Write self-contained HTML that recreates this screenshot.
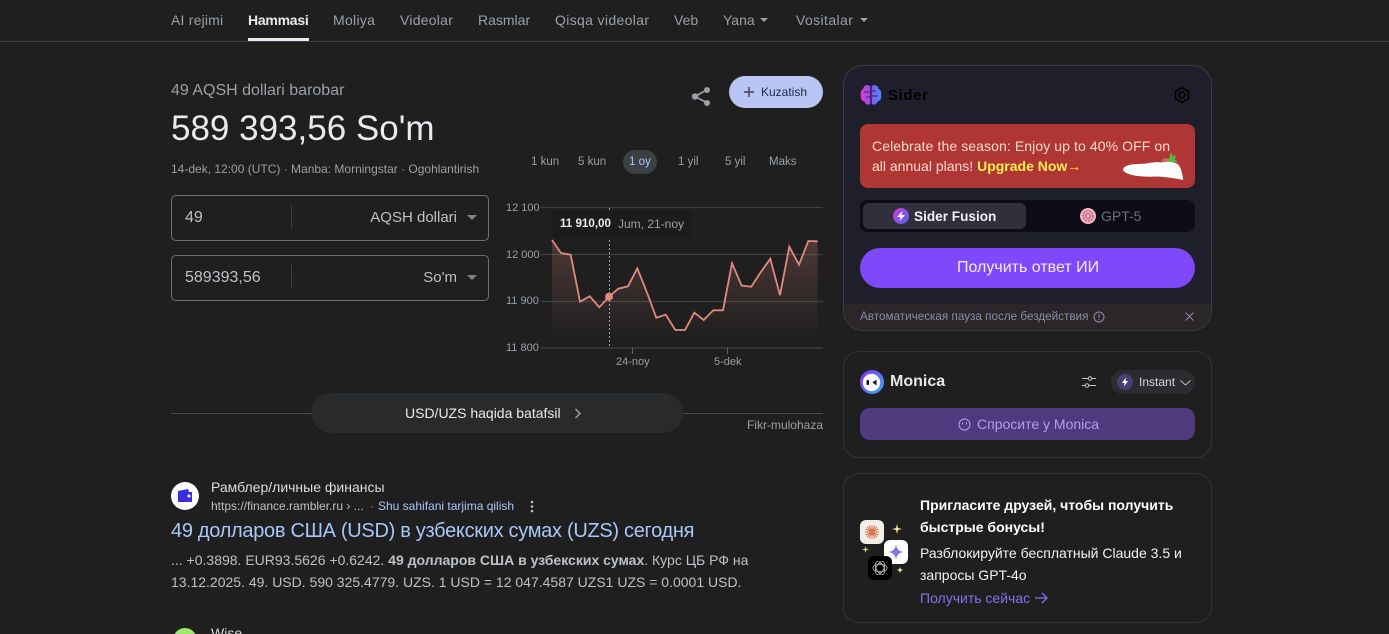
<!DOCTYPE html>
<html lang="uz"><head><meta charset="utf-8"><title>49 AQSH dollari barobar</title>
<style>
html,body{margin:0;padding:0;background:#1f1f1f;width:1389px;height:634px;overflow:hidden}
body{position:relative;font-family:"Liberation Sans","Noto Sans CJK SC",sans-serif;color:#e8eaed}
.t{position:absolute;white-space:nowrap;line-height:1}
.b{position:absolute;box-sizing:border-box}
svg{position:absolute;overflow:visible}
.nav{font-size:14px;color:#9aa0a6;top:13px}
.r{font-size:11.5px;color:#9aa0a6;top:157px}
.y{font-size:11px;color:#9aa0a6;left:506px}
</style></head><body>

<div class="t nav" style="left:171px;letter-spacing:.2px">AI rejimi</div>
<div class="t nav" style="left:248px;color:#e8eaed;font-weight:700;letter-spacing:-.25px">Hammasi</div>
<div class="b" style="left:248px;top:38px;width:61px;height:3px;background:#e8eaed"></div>
<div class="t nav" style="left:333px;letter-spacing:.3px">Moliya</div>
<div class="t nav" style="left:400px;letter-spacing:.25px">Videolar</div>
<div class="t nav" style="left:478px">Rasmlar</div>
<div class="t nav" style="left:555px;letter-spacing:.35px">Qisqa videolar</div>
<div class="t nav" style="left:674px">Veb</div>
<div class="t nav" style="left:723px">Yana</div>
<svg style="left:760px;top:18px" width="8" height="5"><path d="M0 0h8L4 4z" fill="#9aa0a6"/></svg>
<div class="t nav" style="left:796px;letter-spacing:.4px">Vositalar</div>
<svg style="left:860px;top:18px" width="8" height="5"><path d="M0 0h8L4 4z" fill="#9aa0a6"/></svg>
<div class="b" style="left:0;top:41px;width:1389px;height:1px;background:#3c4043"></div>

<div class="t" style="left:171px;top:83px;font-size:16px;color:#9aa0a6">49 AQSH dollari barobar</div>
<div class="t" style="left:171px;top:111px;font-size:35px;color:#e8eaed">589 393,56 So'm</div>
<div class="t" style="left:171px;top:163px;font-size:12px;color:#9aa0a6">14-dek, 12:00 (UTC) · Manba: Morningstar · Ogohlantirish</div>

<svg style="left:690px;top:85px" width="22" height="22" viewBox="0 0 22 22"><path d="M16.5 5L5 11.5l11.500 6" fill="none" stroke="#9aa0a6" stroke-width="1.800"/><circle cx="17" cy="5" r="3" fill="#9aa0a6"/><circle cx="5" cy="11.500" r="3.200" fill="#9aa0a6"/><circle cx="17" cy="18" r="3" fill="#9aa0a6"/></svg>
<div class="b" style="left:729px;top:76px;width:94px;height:32px;border-radius:16px;background:#b9c5f5"></div>
<svg style="left:744px;top:87px" width="10" height="10"><path d="M5 0v10M0 5h10" stroke="#3c4043" stroke-width="1.400"/></svg>
<div class="t" style="left:761px;top:86px;font-size:12px;color:#1f2a44">Kuzatish</div>

<div class="b" style="left:171px;top:195px;width:318px;height:46px;border:1px solid #6d7075;border-radius:5px"></div>
<div class="t" style="left:185px;top:210px;font-size:16px;color:#bdc1c6">49</div>
<div class="b" style="left:291px;top:205px;width:1px;height:24px;background:#3c4043"></div>
<div class="t" style="right:932px;top:210px;font-size:15px;color:#bdc1c6">AQSH dollari</div>
<svg style="left:467px;top:215px" width="10" height="5"><path d="M0 0h10L5 5z" fill="#80868b"/></svg>
<div class="b" style="left:171px;top:255px;width:318px;height:46px;border:1px solid #6d7075;border-radius:5px"></div>
<div class="t" style="left:185px;top:270px;font-size:16px;color:#bdc1c6">589393,56</div>
<div class="b" style="left:291px;top:265px;width:1px;height:24px;background:#3c4043"></div>
<div class="t" style="right:932px;top:270px;font-size:15px;color:#bdc1c6">So'm</div>
<svg style="left:467px;top:275px" width="10" height="5"><path d="M0 0h10L5 5z" fill="#80868b"/></svg>

<div class="t r" style="left:531px">1 kun</div>
<div class="t r" style="left:578px">5 kun</div>
<div class="b" style="left:623px;top:150px;width:34px;height:24px;border-radius:12px;background:#3c4043"></div>
<div class="t r" style="left:629px;color:#a8c7fa">1 oy</div>
<div class="t r" style="left:678px">1 yil</div>
<div class="t r" style="left:725px">5 yil</div>
<div class="t r" style="left:769px">Maks</div>

<div class="t y" style="top:203px">12 100</div>
<div class="t y" style="top:250px">12 000</div>
<div class="t y" style="top:296px">11 900</div>
<div class="t y" style="top:343px">11 800</div>

<svg style="left:0;top:0" width="1389" height="634">
<defs><linearGradient id="g" x1="0" y1="0" x2="0" y2="1"><stop offset="0" stop-color="#e0897f" stop-opacity=".24"/><stop offset="1" stop-color="#e0897f" stop-opacity="0"/></linearGradient></defs>
<path d="M541 207.500H823M541 254.500H823M541 301.500H823M541 348H823" stroke="#3c4043" stroke-width="1.200"/>
<path d="M632.500 348v6M727.500 348v6" stroke="#5f6368"/>
<path d="M552 240L561 253L570.700 254.700L580 301.700L589.700 296.300L599.300 307.300L609 296.700L618.300 288.700L628 286.300L637.300 268.300L647 292.700L656.300 317.700L665.700 314.700L675.300 330L685 330L694.300 312.700L703.700 320L713.300 310.300L723 310.300L732 263.300L741.700 285.700L751.300 286.700L760.700 272.300L770.300 258.700L780 295.300L789.300 246.700L799 264.700L808.300 241L817.700 241.300V336H552Z" fill="url(#g)"/>
<path d="M552 240L561 253L570.700 254.700L580 301.700L589.700 296.300L599.300 307.300L609 296.700L618.300 288.700L628 286.300L637.300 268.300L647 292.700L656.300 317.700L665.700 314.700L675.300 330L685 330L694.300 312.700L703.700 320L713.300 310.300L723 310.300L732 263.300L741.700 285.700L751.300 286.700L760.700 272.300L770.300 258.700L780 295.300L789.300 246.700L799 264.700L808.300 241L817.700 241.300" fill="none" stroke="#e0897f" stroke-width="1.800"/>
<path d="M609.500 208V347" stroke="#9aa0a6" stroke-dasharray="2 2"/>
<circle cx="609" cy="296.700" r="4" fill="#e0897f"/>
</svg>
<div class="b" style="left:551px;top:210px;width:141px;height:28px;background:#1c1c1c;border-radius:4px"></div>
<div class="t" style="left:560px;top:218px;font-size:11.6px;font-weight:700;color:#e8eaed">11 910,00</div>
<div class="t" style="left:618px;top:218px;font-size:12px;color:#9aa0a6">Jum, 21-noy</div>
<div class="t" style="left:616px;top:357px;font-size:11px;color:#9aa0a6">24-noy</div>
<div class="t" style="left:714px;top:357px;font-size:11px;color:#9aa0a6">5-dek</div>

<div class="b" style="left:171px;top:413px;width:652px;height:1px;background:#4a4d50"></div>
<div class="b" style="left:311px;top:393px;width:372px;height:40px;border-radius:20px;background:#282a2c"></div>
<div class="t" style="left:405px;top:406px;font-size:14px;color:#e8eaed">USD/UZS haqida batafsil</div>
<svg style="left:574px;top:408px" width="8" height="11"><path d="M1.500 1l4.500 4.500L1.500 10" fill="none" stroke="#9aa0a6" stroke-width="1.500"/></svg>
<div class="t" style="right:566px;top:419px;font-size:12px;color:#9aa0a6">Fikr-mulohaza</div>

<div class="b" style="left:171px;top:482px;width:28px;height:28px;border-radius:50%;background:#fff"></div>
<svg style="left:177px;top:489px" width="16" height="14"><path d="M1 2L11 0L12 3H15V13H1Z" fill="#3a2ee0"/><circle cx="12" cy="7" r="1.500" fill="#fff"/></svg>
<div class="t" style="left:211px;top:480px;font-size:14px;color:#dadce0">Рамблер/личные финансы</div>
<div class="t" style="left:211px;top:500px;font-size:12px;color:#bdc1c6">https://finance.rambler.ru › ...</div>
<div class="t" style="left:370px;top:500px;font-size:12px;color:#9aa0a6">·</div>
<div class="t" style="left:378px;top:500px;font-size:12px;color:#a8c7fa">Shu sahifani tarjima qilish</div>
<svg style="left:530px;top:500px" width="4" height="13"><circle cx="2" cy="2" r="1.300" fill="#bdc1c6"/><circle cx="2" cy="6.500" r="1.300" fill="#bdc1c6"/><circle cx="2" cy="11" r="1.300" fill="#bdc1c6"/></svg>
<div class="t" style="left:171px;top:521px;font-size:20px;letter-spacing:-.3px;color:#a8c7fa">49 долларов США (USD) в узбекских сумах (UZS) сегодня</div>
<div class="t" style="left:171px;top:553px;font-size:14px;color:#bdc1c6">... +0.3898. EUR93.5626 +0.6242. <b style="color:#bdc1c6">49 долларов США в узбекских сумах</b>. Курс ЦБ РФ на</div>
<div class="t" style="left:171px;top:575px;font-size:14px;color:#bdc1c6">13.12.2025. 49. USD. 590 325.4779. UZS. 1 USD = 12 047.4587 UZS1 UZS = 0.0001 USD.</div>
<div class="b" style="left:173px;top:628px;width:24px;height:24px;border-radius:50%;background:#9fe870"></div>
<div class="t" style="left:211px;top:626px;font-size:14px;color:#dadce0">Wise</div>

<div class="b" style="left:843px;top:65px;width:369px;height:266px;border:1px solid #3a3a46;border-radius:20px;background:#1f1e2b;overflow:hidden">
  <div class="b" style="left:0;top:238px;width:367px;height:27px;background:#2a2629"></div>
</div>
<svg style="left:860px;top:84px" width="22" height="22" viewBox="0 0 22 22"><defs><linearGradient id="s" x1="0" y1="0" x2="1" y2="0"><stop offset="0" stop-color="#e23dc3"/><stop offset=".5" stop-color="#8a4dfa"/><stop offset="1" stop-color="#4d8cf8"/></linearGradient></defs><path d="M10 2C7 0 3.500 1.500 3.500 4.500C1 6 0 9 1 11.500C0 14.500 2 17 4.500 17.500C5.500 21 9 21.500 10.300 19.500V2ZM11.700 2C14.500 0 18 1.500 18.200 4.500C21 6 21.800 9 21 11.500C22 14.500 20 17 17.500 17.500C16.500 21 13 21.500 11.700 19.500Z" fill="url(#s)"/><path d="M4 8h6M12 12h6M6 13h4M12 7h4" stroke="#1f1e2b" stroke-width=".8"/></svg>
<div class="t" style="left:888px;top:88px;font-size:15px;font-weight:700;color:#000;letter-spacing:.6px">Sider</div>
<svg style="left:1174px;top:87px" width="16" height="16" viewBox="0 0 16 16"><path d="M8 .8L14.500 4.400V11.600L8 15.200L1.500 11.600V4.400Z" fill="none" stroke="#000" stroke-width="1.600"/><circle cx="8" cy="8" r="3" fill="none" stroke="#000" stroke-width="1.600"/></svg>

<div class="b" style="left:860px;top:124px;width:335px;height:64px;border-radius:8px;background:#b03535"></div>
<div class="t" style="left:872px;top:139px;font-size:14px;letter-spacing:.09px;color:#f7dcc8">Celebrate the season: Enjoy up to 40% OFF on</div>
<div class="t" style="left:872px;top:159px;font-size:14px;color:#f7dcc8">all annual plans! <b style="color:#fdf04e">Upgrade Now→</b></div>
<svg style="left:1122px;top:150px" width="64" height="30" viewBox="0 0 64 30"><circle cx="44" cy="13" r="5" fill="#b96a70"/><circle cx="52" cy="15" r="5" fill="#a85560"/><path d="M49 2l2 4 3-.500-1 4 2 2-4 1-2 1.500-2-2-3-2 3-1.500z" fill="#5fb53c"/><path d="M1 20C1 16 8 14 16 14C26 14 32 11 40 12.500C48 11 55 12 58 17C60 22 61 27 61 30C52 28 44 27 36 26.500C26 27 5 27 1 20Z" fill="#fff"/></svg>

<div class="b" style="left:860px;top:200px;width:335px;height:32px;border-radius:8px;background:#0d0c17"></div>
<div class="b" style="left:863px;top:203px;width:163px;height:26px;border-radius:6px;background:#30303c"></div>
<svg style="left:893px;top:208px" width="16" height="16" viewBox="0 0 16 16"><defs><linearGradient id="f" x1="0" y1="0" x2="1" y2="1"><stop offset="0" stop-color="#d13ccf"/><stop offset="1" stop-color="#4b62f5"/></linearGradient></defs><circle cx="8" cy="8" r="8" fill="url(#f)"/><path d="M9.500 3L4 9h3.500L6.500 13L12 7H8.500Z" fill="#fff"/></svg>
<div class="t" style="left:914px;top:210px;font-size:13.600px;font-weight:700;color:#f2f2f5">Sider Fusion</div>
<svg style="left:1080px;top:208px" width="16" height="16" viewBox="0 0 16 16"><circle cx="8" cy="8" r="8" fill="#eeb6c4"/><circle cx="8" cy="8" r="5" fill="none" stroke="#c2405f" stroke-width="1.200" stroke-dasharray="2 1"/><circle cx="8" cy="8" r="2.500" fill="none" stroke="#c2405f" stroke-width="1"/></svg>
<div class="t" style="left:1101px;top:209px;font-size:14px;color:#6c6d80">GPT-5</div>

<div class="b" style="left:860px;top:248px;width:335px;height:40px;border-radius:20px;background:#8048fb"></div>
<div class="t" style="left:957px;top:260px;font-size:16px;color:#f3eeff">Получить ответ ИИ</div>
<div class="t" style="left:860px;top:311px;font-size:11.700px;color:#8a8ca8">Автоматическая пауза после бездействия</div>
<svg style="left:1093px;top:311px" width="12" height="12"><circle cx="6" cy="6" r="5" fill="none" stroke="#8a8ca8"/><path d="M6 3v4M6 8v1.200" stroke="#8a8ca8"/></svg>
<svg style="left:1185px;top:312px" width="9" height="9"><path d="M.5 .5l8 8M8.500 .5l-8 8" stroke="#8a8ca8"/></svg>

<div class="b" style="left:843px;top:351px;width:369px;height:107px;border:1px solid #333;border-radius:16px"></div>
<svg style="left:860px;top:370px" width="24" height="24" viewBox="0 0 24 24"><defs><linearGradient id="m" x1="0" y1="0" x2="1" y2="1"><stop offset="0" stop-color="#8a2df0"/><stop offset="1" stop-color="#3da8f5"/></linearGradient></defs><circle cx="12" cy="12" r="12" fill="url(#m)"/><circle cx="11.500" cy="12.500" r="8.700" fill="#fbfbfb"/><rect x="6.500" y="10" width="2.600" height="5" rx="1.300" fill="#14121c"/><path d="M16.500 9.500L12.500 12.500L16.500 15.500z" fill="#14121c"/></svg>
<div class="t" style="left:890px;top:374px;font-size:16px;font-weight:700;color:#e8e8e8">Monica</div>
<svg style="left:1082px;top:375px" width="14" height="14" viewBox="0 0 14 14"><path d="M0 3.500h6M10 3.500h4M0 10.500h3M7 10.500h7" stroke="#c8c8c8"/><circle cx="8" cy="3.500" r="1.800" fill="none" stroke="#c8c8c8"/><circle cx="5" cy="10.500" r="1.800" fill="none" stroke="#c8c8c8"/></svg>
<div class="b" style="left:1111px;top:370px;width:84px;height:24px;border-radius:12px;background:#2c2c30"></div>
<svg style="left:1117px;top:374px" width="16" height="16"><circle cx="8" cy="8" r="8" fill="#4a3f72"/><path d="M9 3.500L5 9h2.500L7 12.500L11 7H8.500Z" fill="#fff"/></svg>
<div class="t" style="left:1139px;top:376px;font-size:12px;font-weight:400;color:#d8d8d8">Instant</div>
<svg style="left:1180px;top:380px" width="11" height="6"><path d="M.5 .5L5.500 5L10.500 .5" fill="none" stroke="#bdbdbd"/></svg>
<div class="b" style="left:860px;top:408px;width:335px;height:32px;border-radius:10px;background:#503a7e"></div>
<svg style="left:958px;top:418px" width="13" height="13"><circle cx="6.500" cy="6.500" r="5.500" fill="none" stroke="#b7a0f0" stroke-width="1"/><path d="M4.500 4.500v2M8.500 4.500v2" stroke="#b7a0f0"/></svg>
<div class="t" style="left:977px;top:417px;font-size:14px;color:#b39df0">Спросите у Monica</div>

<div class="b" style="left:843px;top:473px;width:369px;height:150px;border:1px solid #333;border-radius:16px"></div>
<div class="b" style="left:860px;top:520px;width:24px;height:24px;border-radius:6px;background:#f0eee6"></div>
<svg style="left:862px;top:522px" width="20" height="20" viewBox="0 0 20 20"><path d="M10 3v14M3 10h14M5 5l10 10M15 5l-10 10M7 3.500l6 13M13 3.500l-6 13M3.500 7l13 6M16.500 7l-13 6" stroke="#d97757" stroke-width="1.100"/></svg>
<div class="b" style="left:884px;top:540px;width:24px;height:24px;border-radius:6px;background:#fff"></div>
<svg style="left:888px;top:544px" width="16" height="16" viewBox="0 0 16 16"><defs><linearGradient id="gm" x1="0" y1="0" x2="1" y2="1"><stop offset="0" stop-color="#5b8cf0"/><stop offset="1" stop-color="#a06bd8"/></linearGradient></defs><path d="M8 0C8.500 5 11 7.500 16 8C11 8.500 8.500 11 8 16C7.500 11 5 8.500 0 8C5 7.500 7.500 5 8 0Z" fill="url(#gm)"/></svg>
<div class="b" style="left:868px;top:556px;width:24px;height:24px;border-radius:6px;background:#000"></div>
<svg style="left:872px;top:560px" width="16" height="16" viewBox="0 0 16 16"><g fill="none" stroke="#c8c8c8" stroke-width=".8"><ellipse cx="8" cy="8" rx="7" ry="3.800"/><ellipse cx="8" cy="8" rx="7" ry="3.800" transform="rotate(60 8 8)"/><ellipse cx="8" cy="8" rx="7" ry="3.800" transform="rotate(120 8 8)"/></g></svg>
<svg style="left:892px;top:524px" width="10" height="10" viewBox="0 0 10 10"><path d="M5 0L6 4L10 5L6 6L5 10L4 6L0 5L4 4Z" fill="#f4e2a0"/></svg>
<svg style="left:862px;top:546px" width="7" height="7" viewBox="0 0 10 10"><path d="M5 0L6 4L10 5L6 6L5 10L4 6L0 5L4 4Z" fill="#f4e2a0"/></svg>
<svg style="left:897px;top:567px" width="6" height="6" viewBox="0 0 10 10"><path d="M5 0L6.500 3.500L10 5L6.500 6.500L5 10L3.500 6.500L0 5L3.500 3.500Z" fill="#f4e2a0"/></svg>
<div class="t" style="left:920px;top:498px;font-size:14px;font-weight:700;color:#fff">Пригласите друзей, чтобы получить</div>
<div class="t" style="left:920px;top:520px;font-size:14px;font-weight:700;color:#fff">быстрые бонусы!</div>
<div class="t" style="left:920px;top:546px;font-size:14px;color:#f2f2f2">Разблокируйте бесплатный Claude 3.5 и</div>
<div class="t" style="left:920px;top:568px;font-size:14px;color:#f2f2f2">запросы GPT-4o</div>
<div class="t" style="left:920px;top:591px;font-size:14px;color:#8b6ff0">Получить сейчас</div>
<svg style="left:1035px;top:592px" width="13" height="12"><path d="M0 6h12M7 1l5 5-5 5" fill="none" stroke="#8b6ff0" stroke-width="1.300"/></svg>
</body></html>
